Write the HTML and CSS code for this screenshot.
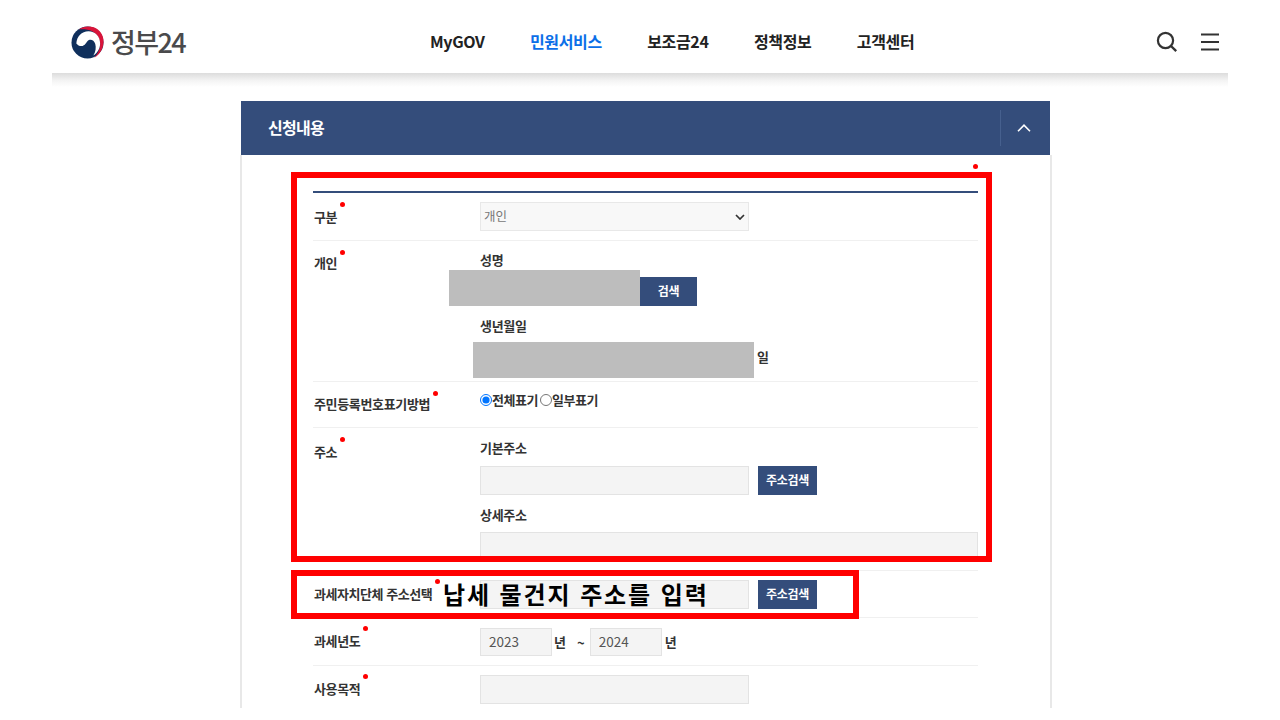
FILE: index.html
```html
<!DOCTYPE html>
<html lang="ko">
<head>
<meta charset="utf-8">
<title>정부24 신청내용</title>
<link rel="stylesheet" href="styles.css">
</head>
<body>
<div class="page">
  <header class="header">
    <a class="logo">
      <svg class="logo-mark" viewBox="0 0 34 34" aria-hidden="true">
        <circle cx="17" cy="17" r="16.5" fill="#0f2f5c"/>
        <path d="M8 3.6C12 .6 18-.6 23.5 1.4 30 3.8 34 10 33.5 17 33 24 29.5 29.5 24 32.6 28 28 30.5 23 30 17.5 29.4 10 23.5 4.6 17 3.8 13.8 3.4 10.6 3.2 8 3.6Z" fill="#d8143a"/>
        <path d="M5.5 18C6 11 11 5.5 18 5.5 25 5.5 30 11 30 18 30 23 27.5 27.5 23 30.5 25.5 26.5 26 22 25 18.5 24 15 21 13.5 18.5 14.5 16 15.5 15.5 19.5 12 20.5 9.5 21 7 20 5.5 18Z" fill="#fff"/>
      </svg>
      <span class="logo-text">정부24</span>
    </a>
    <nav class="nav">
      <a class="nav-item">MyGOV</a>
      <a class="nav-item nav-active">민원서비스</a>
      <a class="nav-item">보조금24</a>
      <a class="nav-item">정책정보</a>
      <a class="nav-item">고객센터</a>
    </nav>
    <div class="tools">
      <svg class="tool-search" viewBox="0 0 22 22" aria-hidden="true">
        <circle cx="9.5" cy="9.5" r="7.6" fill="none" stroke="#333" stroke-width="2.2"/>
        <path d="M15 15l5.2 5.2" fill="none" stroke="#333" stroke-width="2.4"/>
      </svg>
      <svg class="tool-menu" viewBox="0 0 20 20" aria-hidden="true">
        <path d="M1 2.5h18M1 10h18M1 17.5h18" fill="none" stroke="#333" stroke-width="2"/>
      </svg>
    </div>
  </header>
  <div class="header-shade"></div>

  <section class="panel">
    <div class="panel-title">
      <h2 class="panel-heading">신청내용</h2>
      <div class="panel-toggle">
        <svg class="chevron" viewBox="0 0 14 8" aria-hidden="true">
          <path d="M1 7.2L7 1.2l6 6" fill="none" stroke="#fff" stroke-width="1.6"/>
        </svg>
      </div>
    </div>
    <div class="panel-body">
      <span class="stray-dot"></span>
      <div class="form">
        <div class="row">
          <div class="label"><span class="req">구분</span></div>
          <div class="field">
            <div class="select-wrap">
              <select class="select"><option>개인</option></select>
              <svg class="select-arrow" viewBox="0 0 10 6" aria-hidden="true">
                <path d="M1 1l4 4 4-4" fill="none" stroke="#333" stroke-width="1.7"/>
              </svg>
            </div>
          </div>
        </div>
        <div class="row row-person">
          <div class="label"><span class="req req-low">개인</span></div>
          <div class="field">
            <div class="sub-label">성명</div>
            <div class="line">
              <input class="input input-name" type="text"><button class="btn btn-wide">검색</button>
            </div>
            <div class="sub-label sub-next">생년월일</div>
            <div class="line line-date">
              <input class="input input-birth" type="text"><span class="unit">일</span>
            </div>
          </div>
        </div>
        <div class="row row-radio">
          <div class="label"><span class="req req-low">주민등록번호표기방법</span></div>
          <div class="field radios">
            <label class="radio"><input type="radio" name="mark" checked>전체표기</label>
            <label class="radio"><input type="radio" name="mark">일부표기</label>
          </div>
        </div>
        <div class="row row-address">
          <div class="label"><span class="req">주소</span></div>
          <div class="field">
            <div class="sub-label">기본주소</div>
            <div class="line line-gap">
              <input class="input input-mid" type="text"><button class="btn">주소검색</button>
            </div>
            <div class="sub-label sub-next">상세주소</div>
            <input class="input input-full" type="text">
          </div>
        </div>
        <div class="row row-tax">
          <div class="label"><span class="req tight">과세자치단체 주소선택</span></div>
          <div class="field line">
            <input class="input input-mid" type="text"><button class="btn">주소검색</button>
          </div>
        </div>
        <div class="row row-year">
          <div class="label"><span class="req">과세년도</span></div>
          <div class="field years">
            <input class="input input-year" type="text" value="2023">
            <span class="unit">년</span>
            <span class="tilde">~</span>
            <input class="input input-year" type="text" value="2024">
            <span class="unit">년</span>
          </div>
        </div>
        <div class="row row-last">
          <div class="label"><span class="req">사용목적</span></div>
          <div class="field">
            <input class="input input-mid" type="text">
          </div>
        </div>
      </div>
    </div>
  </section>

  <div class="redact redact-name"></div>
  <div class="redact redact-birth"></div>
  <div class="mark mark-main"></div>
  <div class="mark mark-tax"></div>
  <div class="note">납세 물건지 주소를 입력</div>
</div>
</body>
</html>
```
FILE: styles.css
```css
* { box-sizing: border-box; }
html, body { margin: 0; padding: 0; background: #fff; }
body {
  font-family: "Noto Sans CJK KR", "Noto Sans", sans-serif;
  color: #222;
  overflow: hidden;
}
.page {
  position: relative;
  width: 1176px;
  height: 708px;
  margin: 0 auto;
  overflow: hidden;
  background: #fff;
}

/* header */
.header {
  display: flex;
  align-items: center;
  height: 73px;
  padding: 20px 8px 10px 19px;
}
.logo { display: flex; align-items: center; width: 115px; gap: 7px; }
.logo-mark { width: 33px; height: 33px; flex: none; margin-top: 1px; }
.logo-text {
  font-size: 27px;
  font-weight: 500;
  line-height: 33px;
  color: #4a4a4c;
  letter-spacing: -1.6px;
  white-space: nowrap;
}
.nav { display: flex; gap: 45.4px; margin: 0 0 2px 244px; }
.nav-item {
  font-size: 16px;
  font-weight: 700;
  line-height: 24px;
  letter-spacing: -0.35px;
  color: #222;
  white-space: nowrap;
}
.nav-active { color: #0b6fe8; }
.tools { display: flex; align-items: center; gap: 22px; margin-left: auto; }
.tool-search { width: 22px; height: 22px; display: block; }
.tool-menu { width: 20px; height: 20px; display: block; }
.header-shade {
  height: 14px;
  background: linear-gradient(#dcdcdc, #f4f4f4 55%, #fff);
}

/* panel */
.panel { width: 809px; margin: 14px 0 0 189px; }
.panel-title {
  display: flex;
  align-items: center;
  justify-content: space-between;
  height: 54px;
  padding-left: 27px;
  background: #344d7b;
}
.panel-heading {
  margin: 0 0 2px;
  font-size: 16px;
  font-weight: 700;
  letter-spacing: -0.7px;
  color: #fff;
}
.panel-toggle {
  display: flex;
  align-items: center;
  justify-content: center;
  width: 50px;
  height: 36px;
  padding-right: 4px;
  border-left: 1px solid #46608e;
}
.chevron { width: 14px; height: 8px; display: block; }
.panel-body {
  position: relative;
  margin: 0 -2px 0 -1px;
  padding: 36px 72px 40px 71px;
  border-left: 2px solid #e8e8e8;
  border-right: 2px solid #e8e8e8;
}
.stray-dot {
  position: absolute;
  top: 9px;
  right: 72px;
  width: 5px;
  height: 5px;
  border-radius: 50%;
  background: #f00;
}
.form { border-top: 2px solid #344d7b; }

/* rows */
.row {
  display: grid;
  grid-template-columns: 167px 1fr;
  padding: 9px 0;
  border-bottom: 1px solid #f0f0f0;
}
.label {
  margin-top: 5px;
  padding-left: 1px;
  font-size: 13px;
  font-weight: 700;
  line-height: 20px;
  letter-spacing: -0.35px;
  color: #333;
}
.req { position: relative; display: inline-block; white-space: nowrap; }
.req::after {
  content: "";
  position: absolute;
  left: 100%;
  top: -5px;
  margin-left: 3px;
  width: 5px;
  height: 5px;
  border-radius: 50%;
  background: #f00;
}
.req-low::after { top: -3px; }
.tight { letter-spacing: -0.45px; }
.field { min-width: 0; }
.sub-label {
  font-size: 13px;
  font-weight: 700;
  line-height: 20px;
  letter-spacing: -0.3px;
  color: #333;
}
.sub-next { margin-top: 10px; }
.line { display: flex; align-items: center; margin-top: 7px; }
.field.line { margin-top: 0; }
.line-gap { margin-top: 8px; }
.input-mid + .btn { margin-left: 9px; }

.select-wrap { position: relative; width: 269px; }
.select {
  display: block;
  width: 100%;
  height: 29px;
  padding: 0 0 0 3px;
  font: 12.5px/1 "Noto Sans CJK KR", sans-serif;
  color: #777;
  background: #f8f8f8;
  border: 1px solid #e8e8e8;
  border-radius: 0;
  appearance: none;
}
.select-arrow {
  position: absolute;
  right: 4px;
  top: 12px;
  width: 10px;
  height: 6px;
}
.input {
  display: block;
  height: 29px;
  padding: 0 7px;
  font: 13.5px "Noto Sans CJK KR", sans-serif;
  color: #555;
  background: #f4f4f4;
  border: 1px solid #e3e3e3;
  border-radius: 0;
}
.input-name { width: 160px; }
.input-birth { width: 274px; }
.input-mid { width: 269px; }
.input-full { width: 498px; margin-top: 7px; }
.input-year { width: 72px; height: 28px; padding: 0 8px 2px; }
.btn {
  width: 59px;
  height: 29px;
  padding: 0 0 2px;
  font: 700 12px "Noto Sans CJK KR", sans-serif;
  letter-spacing: -0.3px;
  color: #fff;
  background: #344d7b;
  border: 0;
  border-radius: 0;
}
.btn-wide { width: 57px; }
.unit {
  font-size: 13px;
  font-weight: 700;
  line-height: 20px;
  color: #333;
}
.line-date .unit { margin: 0 0 2px 3px; }

.row-person { padding-bottom: 9px; }
.row-person .label { margin-top: 3px; }
.row-radio { height: 46px; padding-top: 8px; }
.row-radio .label { margin-top: 4px; }
.row-address { height: 143px; padding-top: 10px; }
.row-address .label { margin-top: 4px; }
.row-tax { height: 47px; padding-bottom: 8px; }
.row-tax .label { margin-top: 4px; }
.row-year { height: 48px; padding-top: 10px; }
.row-year .label { margin-top: 3px; }
.row-last { border-bottom: 0; }
.row-last .label { margin-top: 4px; }
.radios { display: flex; align-items: center; height: 20px; }
.radio {
  display: flex;
  align-items: center;
  font-size: 13px;
  font-weight: 700;
  line-height: 20px;
  letter-spacing: -0.45px;
  color: #333;
}
.radio input { width: 12px; height: 12px; margin: 0; }
.radio + .radio { margin-left: 2px; }
.years { display: flex; align-items: center; }
.years .unit { margin-left: 2px; }
.years .unit:last-child { margin-left: 3px; }
.tilde { margin: 0 5px 0 11px; font-size: 13px; font-weight: 700; color: #333; }

/* overlays */
.redact { position: absolute; background: #bdbdbd; }
.redact-name { left: 397px; top: 270px; width: 191px; height: 36px; }
.redact-birth { left: 421px; top: 342px; width: 281px; height: 36px; }
.mark { position: absolute; border: 6px solid #f00; }
.mark-main { left: 239px; top: 172px; width: 701px; height: 390px; }
.mark-tax { left: 239px; top: 570px; width: 568px; height: 49px; }
.note {
  position: absolute;
  left: 391px;
  top: 576px;
  font-size: 24px;
  font-weight: 700;
  line-height: 36px;
  letter-spacing: 1.9px;
  color: #000;
  white-space: nowrap;
}
```
